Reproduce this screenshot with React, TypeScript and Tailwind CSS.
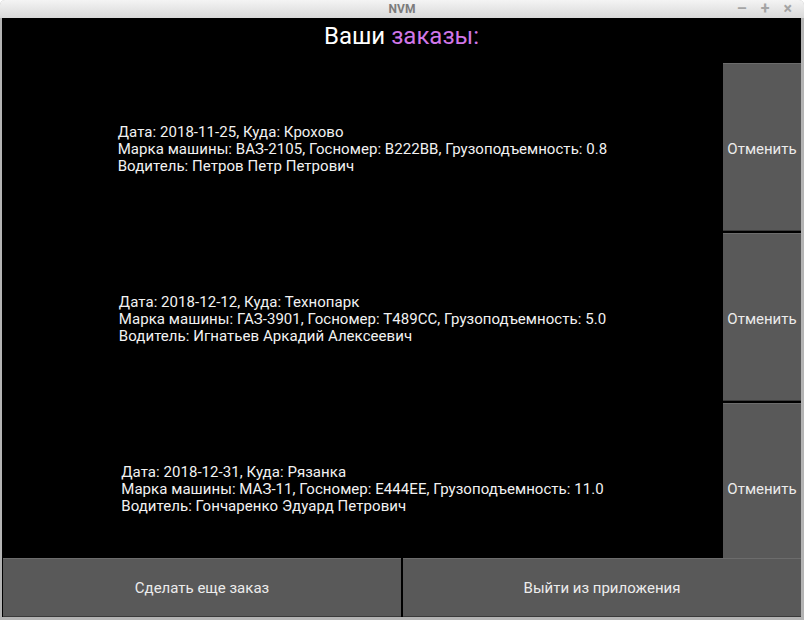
import React from 'react';

type Order = {
  date: string;
  place: string;
  car: string;
  plate: string;
  capacity: string;
  driver: string;
};

const orders: Order[] = [
  { date: '2018-11-25', place: 'Крохово', car: 'ВАЗ-2105', plate: 'В222ВВ', capacity: '0.8', driver: 'Петров Петр Петрович' },
  { date: '2018-12-12', place: 'Технопарк', car: 'ГАЗ-3901', plate: 'Т489СС', capacity: '5.0', driver: 'Игнатьев Аркадий Алексеевич' },
  { date: '2018-12-31', place: 'Рязанка', car: 'МАЗ-11', plate: 'Е444ЕЕ', capacity: '11.0', driver: 'Гончаренко Эдуард Петрович' },
];

const font = { fontFamily: 'Roboto, "Noto Sans", sans-serif' };

const OrderRow: React.FC<{ order: Order }> = ({ order }) => (
  <div className="flex h-[170px] shrink-0">
    <div className="flex flex-1 items-center justify-center pt-[2px]">
      <div className="text-[15px] leading-[17px] tracking-[0.05px] text-[#f2f2f2]">
        <p>Дата: {order.date}, Куда: {order.place}</p>
        <p>
          Марка машины: {order.car}, Госномер: {order.plate}, Грузоподъемность: {order.capacity}
        </p>
        <p>Водитель: {order.driver}</p>
      </div>
    </div>
    <button className="h-[168px] w-[78px] border-t border-t-[#6c6c6c] border-b border-b-[#3a3a3a] bg-[#595959] pt-[5px] text-[15px] text-[#ececec]">
      Отменить
    </button>
  </div>
);

export default function App() {
  return (
    <div className="flex h-[620px] w-[804px] flex-col overflow-hidden rounded-t-[5px] bg-[#b4b4b4]" style={font}>
      {/* title bar */}
      <div className="relative flex h-[18px] shrink-0 items-center justify-center bg-gradient-to-b from-[#f4f4f4] to-[#d9d9d9]">
        <span className="text-[12px] font-bold leading-none text-[#7c7c7c]">NVM</span>
        <div className="absolute right-[12px] top-0 flex h-full items-center gap-[14px] text-[16px] font-bold leading-none text-[#a4a4a4]">
          <span>–</span>
          <span>+</span>
          <span>×</span>
        </div>
      </div>

      <div className="ml-[2px] mr-[3px] mb-[3px] flex flex-1 flex-col bg-black">
        <div className="flex h-[45px] shrink-0 items-start justify-center pt-[3px]">
          <h1 className="text-[24px] leading-[30px] text-white">
            Ваши <span className="text-[#d177e8]">заказы:</span>
          </h1>
        </div>

        <div className="flex h-[495px] flex-col overflow-hidden">
          {orders.map((o) => (
            <OrderRow key={o.date} order={o} />
          ))}
        </div>

        <div className="flex flex-1 gap-[2px] pl-[1px]">
          <button className="flex-1 border-t border-t-[#6c6c6c] border-b border-b-[#3a3a3a] bg-[#595959] pt-[2px] text-[15px] text-[#ececec]">
            Сделать еще заказ
          </button>
          <button className="flex-1 border-t border-t-[#6c6c6c] border-b border-b-[#3a3a3a] bg-[#595959] pt-[2px] text-[15px] text-[#ececec]">
            Выйти из приложения
          </button>
        </div>
      </div>
    </div>
  );
}
